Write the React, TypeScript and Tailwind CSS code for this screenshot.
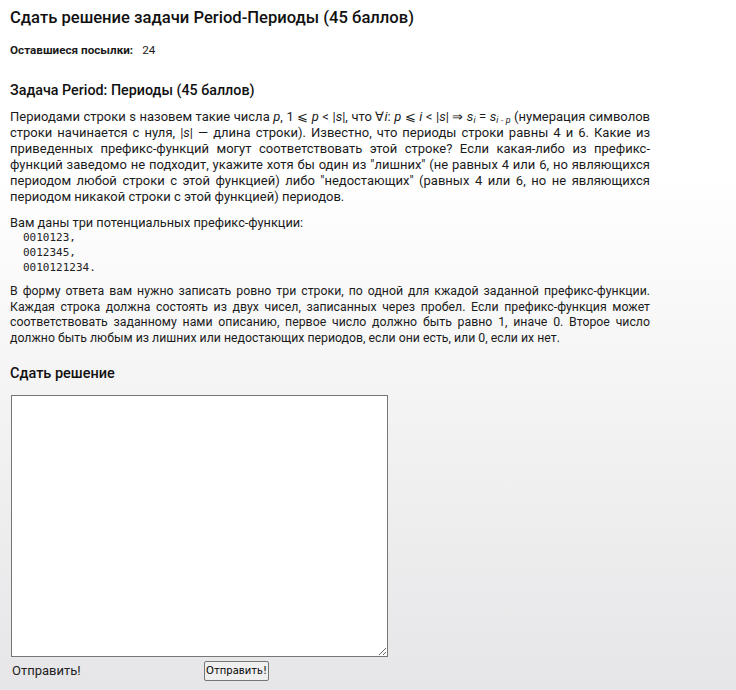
import React from "react";

const font = "font-['Roboto','Liberation_Sans',sans-serif]";

function M({ children }: { children: React.ReactNode }) {
  return <i className="italic">{children}</i>;
}

export default function App() {
  return (
    <div
      className={`min-h-[690px] w-full bg-gradient-to-b from-white from-25% to-[#e6e5e7] text-[#1b1b1b] ${font}`}
    >
      <div className="px-[10px] pt-[7px]">
        {/* Page title */}
        <h1 className="text-[16.6px] font-medium leading-[22px] text-[#111]">
          Сдать решение задачи Period-Периоды (45 баллов)
        </h1>

        {/* Submissions left */}
        <div className="mt-[14px] flex text-[11.7px] leading-[14px]">
          <span className="font-bold">Оставшиеся посылки:</span>
          <span className="ml-[9px]">24</span>
        </div>

        {/* Statement */}
        <h3 className="mt-[24px] text-[14.3px] font-medium leading-[18px] text-[#111]">
          Задача Period: Периоды (45 баллов)
        </h3>

        <div className="w-[640px] text-[13px]">
          <p className="mt-[10px] text-justify leading-[16px]">
            Периодами строки s назовем такие числа <M>p</M>, 1 ⩽ <M>p</M> &lt;
            |<M>s</M>|, что ∀<M>i</M>: <M>p</M> ⩽ <M>i</M> &lt; |<M>s</M>| ⇒{" "}
            <M>s</M>
            <sub className="text-[9px] italic">i</sub> = <M>s</M>
            <sub className="text-[9px] italic">i - p</sub> (нумерация символов
            строки начинается с нуля, |<M>s</M>| — длина строки). Известно, что
            периоды строки равны 4 и 6. Какие из приведенных префикс-функций
            могут соответствовать этой строке? Если какая-либо из
            префикс-функций заведомо не подходит, укажите хотя бы один из
            "лишних" (не равных 4 или 6, но являющихся периодом любой строки с
            этой функцией) либо "недостающих" (равных 4 или 6, но не являющихся
            периодом никакой строки с этой функцией) периодов.
          </p>

          <p className="mt-[10px] text-[12.75px] leading-[15px]">
            Вам даны три потенциальных префикс-функции:
          </p>
          <div className="pl-[13px] font-['DejaVu_Sans_Mono',monospace] text-[11px] leading-[15px] text-[#222]">
            <div>0010123,</div>
            <div>0012345,</div>
            <div>0010121234.</div>
          </div>

          <p className="mt-[9px] text-justify text-[12.3px] leading-[15.5px]">
            В форму ответа вам нужно записать ровно три строки, по одной для
            кжадой заданной префикс-функции. Каждая строка должна состоять из
            двух чисел, записанных через пробел. Если префикс-функция может
            соответствовать заданному нами описанию, первое число должно быть
            равно 1, иначе 0. Второе число должно быть любым из лишних или
            недостающих периодов, если они есть, или 0, если их нет.
          </p>
        </div>

        {/* Submit form */}
        <h3 className="mt-[19px] text-[14.5px] font-medium leading-[18px] text-[#111]">
          Сдать решение
        </h3>
        <textarea className="mt-[12px] ml-[1px] block h-[262px] w-[377px] resize border border-[#767676] bg-white" />
        <div className="mt-[4px] flex items-center">
          <span className="ml-[2px] w-[192px] text-[13px] leading-[20px] text-[#222]">
            Отправить!
          </span>
          <button className="h-[20px] w-[65px] rounded-[2px] border border-[#767676] bg-[#efefef] font-['DejaVu_Sans',sans-serif] text-[10px] leading-none text-black">
            Отправить!
          </button>
        </div>
      </div>
    </div>
  );
}
